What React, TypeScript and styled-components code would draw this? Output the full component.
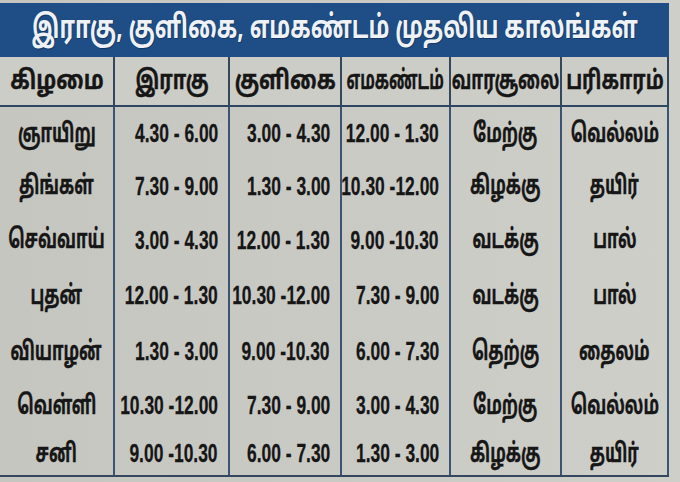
import React from "react";
import styled, { createGlobalStyle } from "styled-components";

const Global = createGlobalStyle`
  html, body { margin: 0; padding: 0; background: #c9c9c4; }
  #root { width: 680px; height: 482px; overflow: hidden; }
`;

const Page = styled.div`
  width: 680px;
  height: 482px;
  box-sizing: border-box;
  padding-top: 3px;
  background: linear-gradient(90deg, #c6c6c1 0%, #cbcbc6 60%, #cfcfca 100%);
  font-family: "Noto Sans Tamil", "Noto Sans", "Liberation Sans", sans-serif;
`;

const Sheet = styled.div`
  width: 669px;
  display: flex;
  flex-direction: column;
`;

const Banner = styled.div`
  height: 54px;
  background: #1f4e86;
  display: flex;
  align-items: center;
  justify-content: center;
  color: #eef2f6;
  font-size: 32px;
  font-weight: 700;
  white-space: nowrap;
  text-shadow: 0 0 1px #0d2a4e, 1px 1px 0 #143a66;
`;

const Squeeze = styled.span<{ $x: number; $origin?: string }>`
  display: inline-block;
  white-space: pre;
  transform: scaleX(${(p) => p.$x});
  transform-origin: ${(p) => p.$origin ?? "center"} center;
`;

const Grid = styled.div`
  display: grid;
  grid-template-columns: 115px 115px 112px 109px 111px 107px;
  grid-template-rows: 50px 52px 53px 55px 56px 56px 52px 44px;
  border-bottom: 2px solid #33475f;
`;

const HeadCell = styled.div`
  min-width: 0;
  display: flex;
  align-items: center;
  justify-content: center;
  box-sizing: border-box;
  border-right: 2px solid #34475c;
  border-bottom: 2px solid #2f4663;
  background: #cdcdc7;
  color: #161616;
  font-size: 26px;
  font-weight: 700;
  line-height: 1;
  padding-top: 3px;
  white-space: nowrap;
  -webkit-text-stroke: 0.4px #161616;
`;

const Cell = styled.div<{ $align: "center" | "right" }>`
  min-width: 0;
  display: flex;
  align-items: center;
  justify-content: ${(p) => (p.$align === "right" ? "flex-end" : "center")};
  padding-right: ${(p) => (p.$align === "right" ? "10px" : "0")};
  box-sizing: border-box;
  border-right: 2px solid #3b5472;
  color: #161616;
  white-space: nowrap;
`;

const Word = styled(Squeeze)`
  font-size: 26px;
  font-weight: 700;
  line-height: 1;
  margin-top: 5px;
  -webkit-text-stroke: 0.4px #161616;
`;

const Time = styled(Squeeze)`
  font-family: "Liberation Sans", Arial, sans-serif;
  font-size: 26px;
  font-weight: 700;
  line-height: 1;
  -webkit-text-stroke: 0.3px #161616;
`;

const headers: [string, number][] = [
  ["கிழமை", 0.82],
  ["இராகு", 0.75],
  ["குளிகை", 0.8],
  ["எமகண்டம்", 0.6],
  ["வாரசூலை", 0.66],
  ["பரிகாரம்", 0.74],
];

const rows: [string, string, string, string, string, string][] = [
  ["ஞாயிறு", "4.30 - 6.00", "3.00 - 4.30", "12.00 - 1.30", "மேற்கு", "வெல்லம்"],
  ["திங்கள்", "7.30 - 9.00", "1.30 - 3.00", "10.30 -12.00", "கிழக்கு", "தயிர்"],
  ["செவ்வாய்", "3.00 - 4.30", "12.00 - 1.30", "9.00 -10.30", "வடக்கு", "பால்"],
  ["புதன்", "12.00 - 1.30", "10.30 -12.00", "7.30 - 9.00", "வடக்கு", "பால்"],
  ["வியாழன்", "1.30 - 3.00", "9.00 -10.30", "6.00 - 7.30", "தெற்கு", "தைலம்"],
  ["வெள்ளி", "10.30 -12.00", "7.30 - 9.00", "3.00 - 4.30", "மேற்கு", "வெல்லம்"],
  ["சனி", "9.00 -10.30", "6.00 - 7.30", "1.30 - 3.00", "கிழக்கு", "தயிர்"],
];

export default function App() {
  return (
    <>
      <Global />
      <Page>
        <Sheet>
          <Banner>
            <Squeeze $x={0.7}>இராகு, குளிகை, எமகண்டம் முதலிய காலங்கள்</Squeeze>
          </Banner>
          <Grid>
            {headers.map(([h, x]) => (
              <HeadCell key={h}>
                <Squeeze $x={x}>{h}</Squeeze>
              </HeadCell>
            ))}
            {rows.map((r) =>
              r.map((v, i) => {
                const isTime = i >= 1 && i <= 3;
                return (
                  <Cell key={r[0] + i} $align={isTime ? "right" : "center"}>
                    {isTime ? (
                      <Time $x={0.67} $origin="right">{v}</Time>
                    ) : (
                      <Word $x={0.64}>{v}</Word>
                    )}
                  </Cell>
                );
              })
            )}
          </Grid>
        </Sheet>
      </Page>
    </>
  );
}
